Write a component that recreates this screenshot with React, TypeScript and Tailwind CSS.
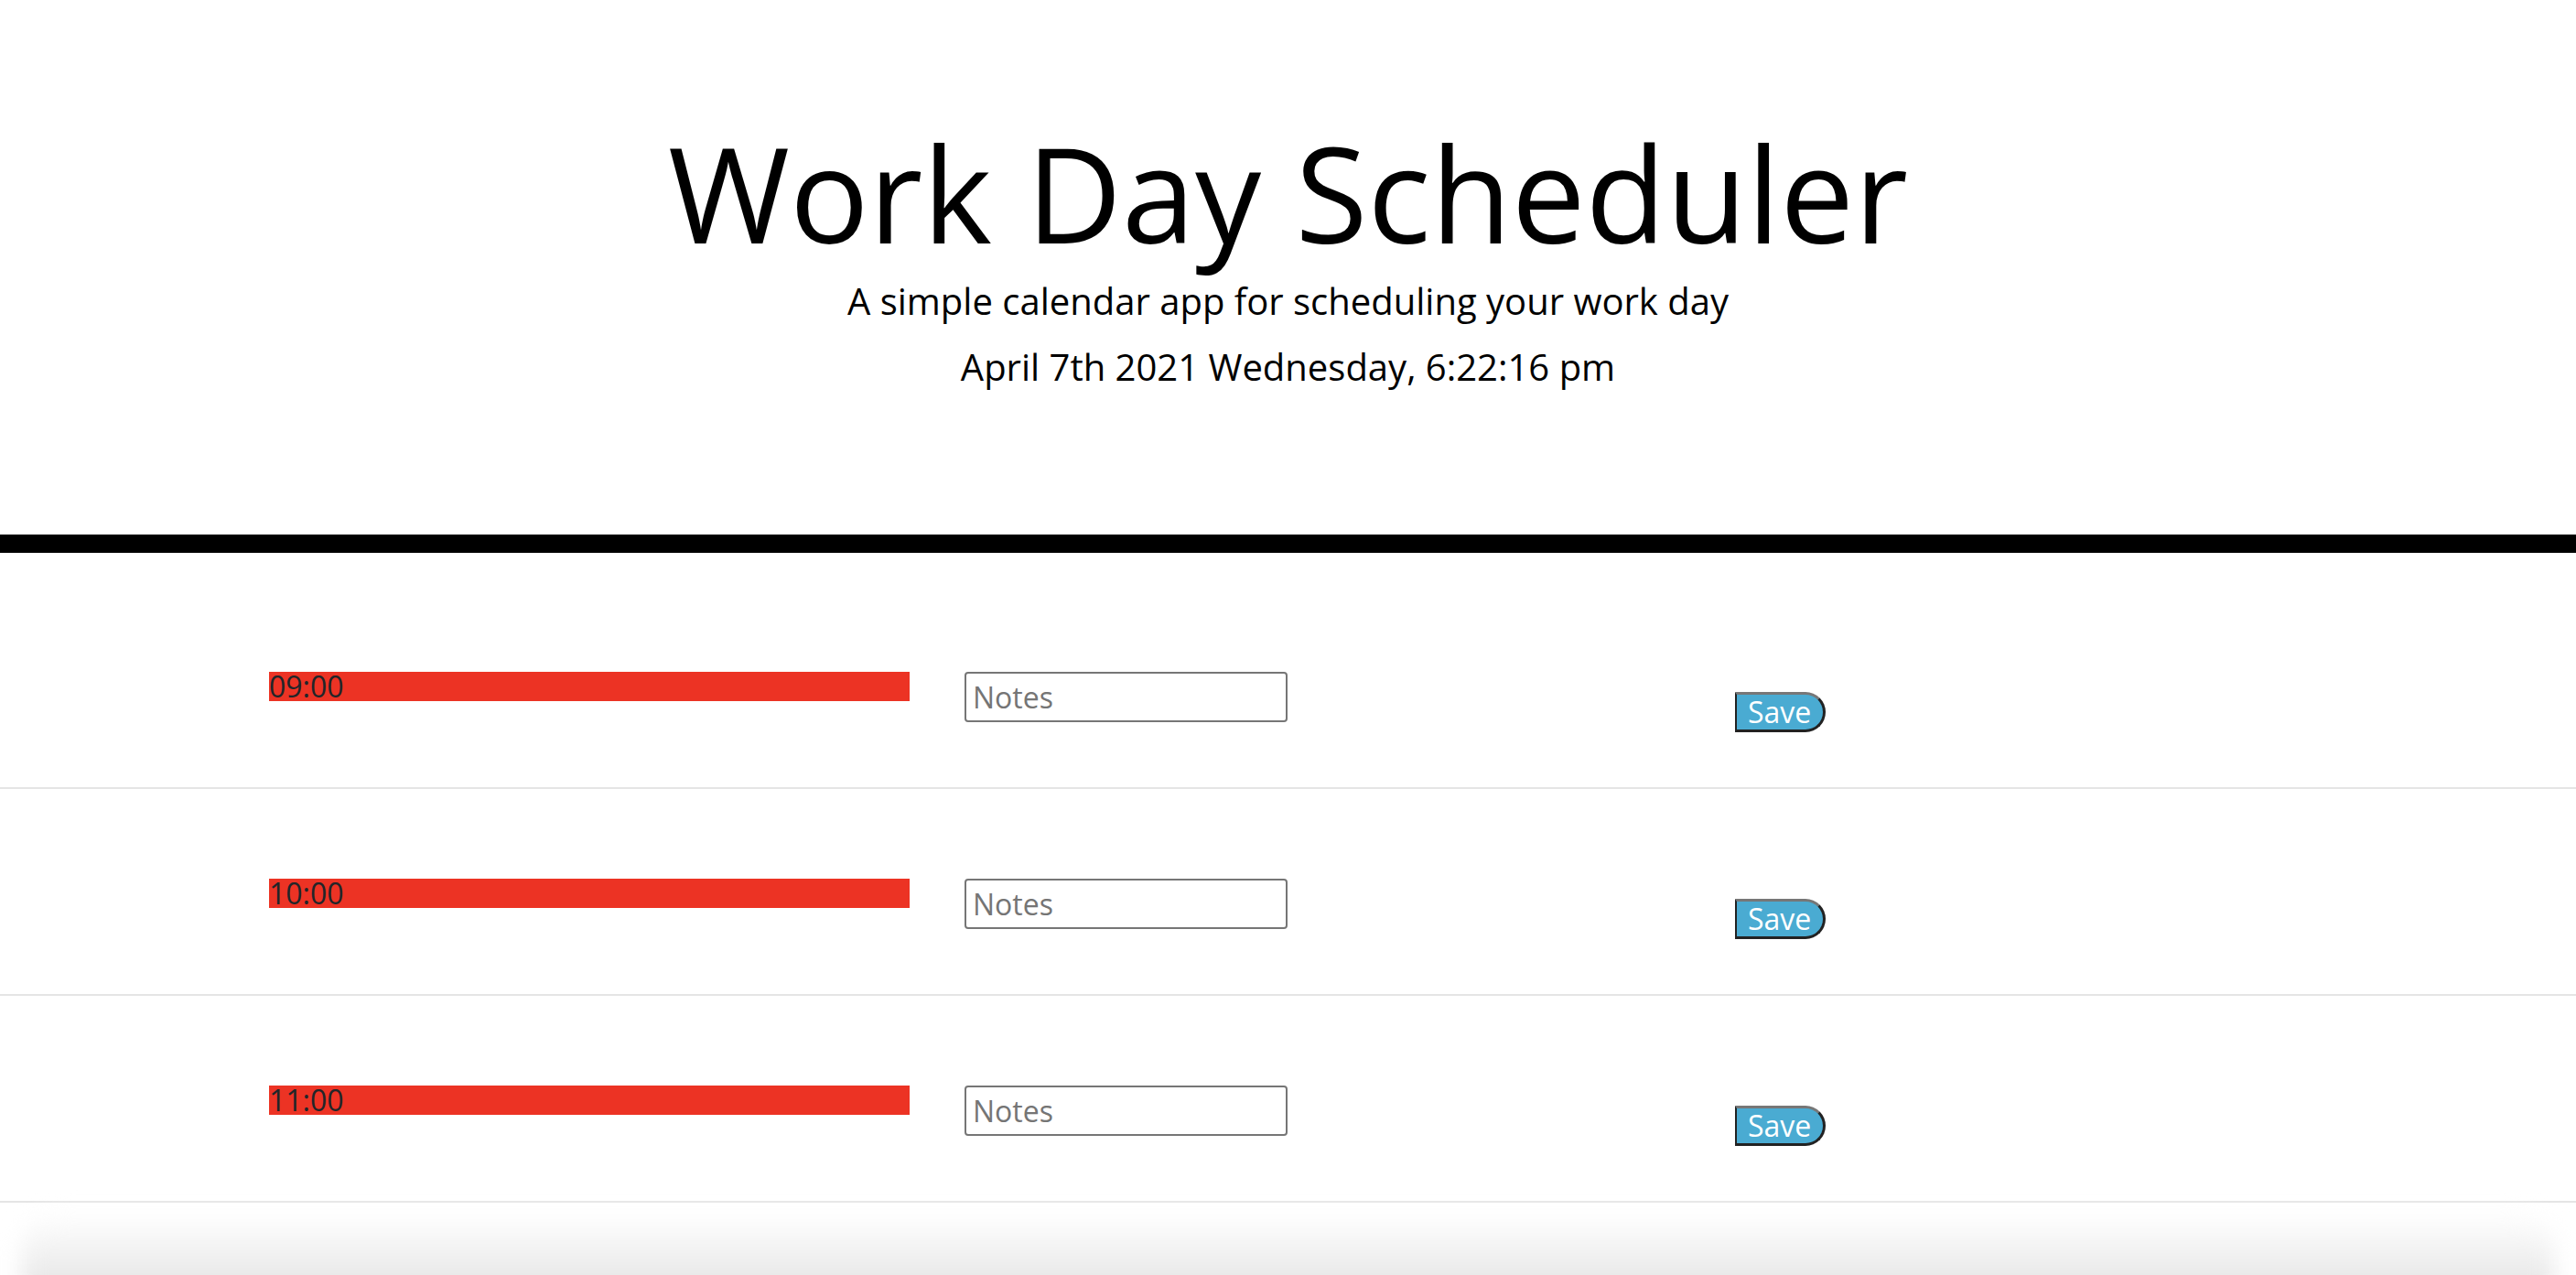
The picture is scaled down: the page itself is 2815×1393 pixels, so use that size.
import React from "react"

const hours = ["09:00", "10:00", "11:00"]

const TimeRow = ({ hour, first }: { hour: string; first?: boolean }) => {
  return (
    <div
      className={`flex items-start h-[226px] pt-[98px] pl-[294px] border-b-2 border-[#e5e5e5] ${first ? "mt-[32px]" : ""}`}
    >
      <div className="w-[700px] h-[32px] bg-[#ec3324] text-[#212529] text-[32px] leading-[32px]">
        {hour}
      </div>
      <input
        type="text"
        placeholder="Notes"
        className="ml-[60px] w-[353px] h-[55px] border-2 border-[#767676] rounded-[4px] px-[7px] text-[32px] text-black placeholder:text-[#757575] outline-none"
      />
      <button className="ml-[489px] mt-[22px] w-[99px] h-[44px] bg-[#4aabd2] text-white text-[32px] leading-none text-left pl-[12px] border-t-[3px] border-l-[2px] border-r-[3px] border-b-[3px] border-t-[#777777] border-l-[#222222] border-r-[#222222] border-b-[#222222] rounded-r-[22px]">
        Save
      </button>
    </div>
  )
}

export default function App() {
  return (
    <div className="min-h-[1393px] bg-white overflow-hidden font-['Open_Sans',sans-serif] text-black">
      <header className="pt-[131px] h-[604px] border-b-[20px] border-black text-center">
        <h1 className="text-[144px] leading-[1.1] font-normal">Work Day Scheduler</h1>
        <p className="mt-[10px] text-[40px] leading-[1.5]">A simple calendar app for scheduling your work day</p>
        <p className="mt-[12px] text-[40px] leading-[1.5]">April 7th 2021 Wednesday, 6:22:16 pm</p>
      </header>

      {hours.map((h, i) => (
        <TimeRow key={h} hour={h} first={i === 0} />
      ))}

      <div className="mt-[12px] mx-[24px] h-[120px] rounded-[40px] bg-gradient-to-b from-white to-[#dadada] blur-md" />
    </div>
  )
}
